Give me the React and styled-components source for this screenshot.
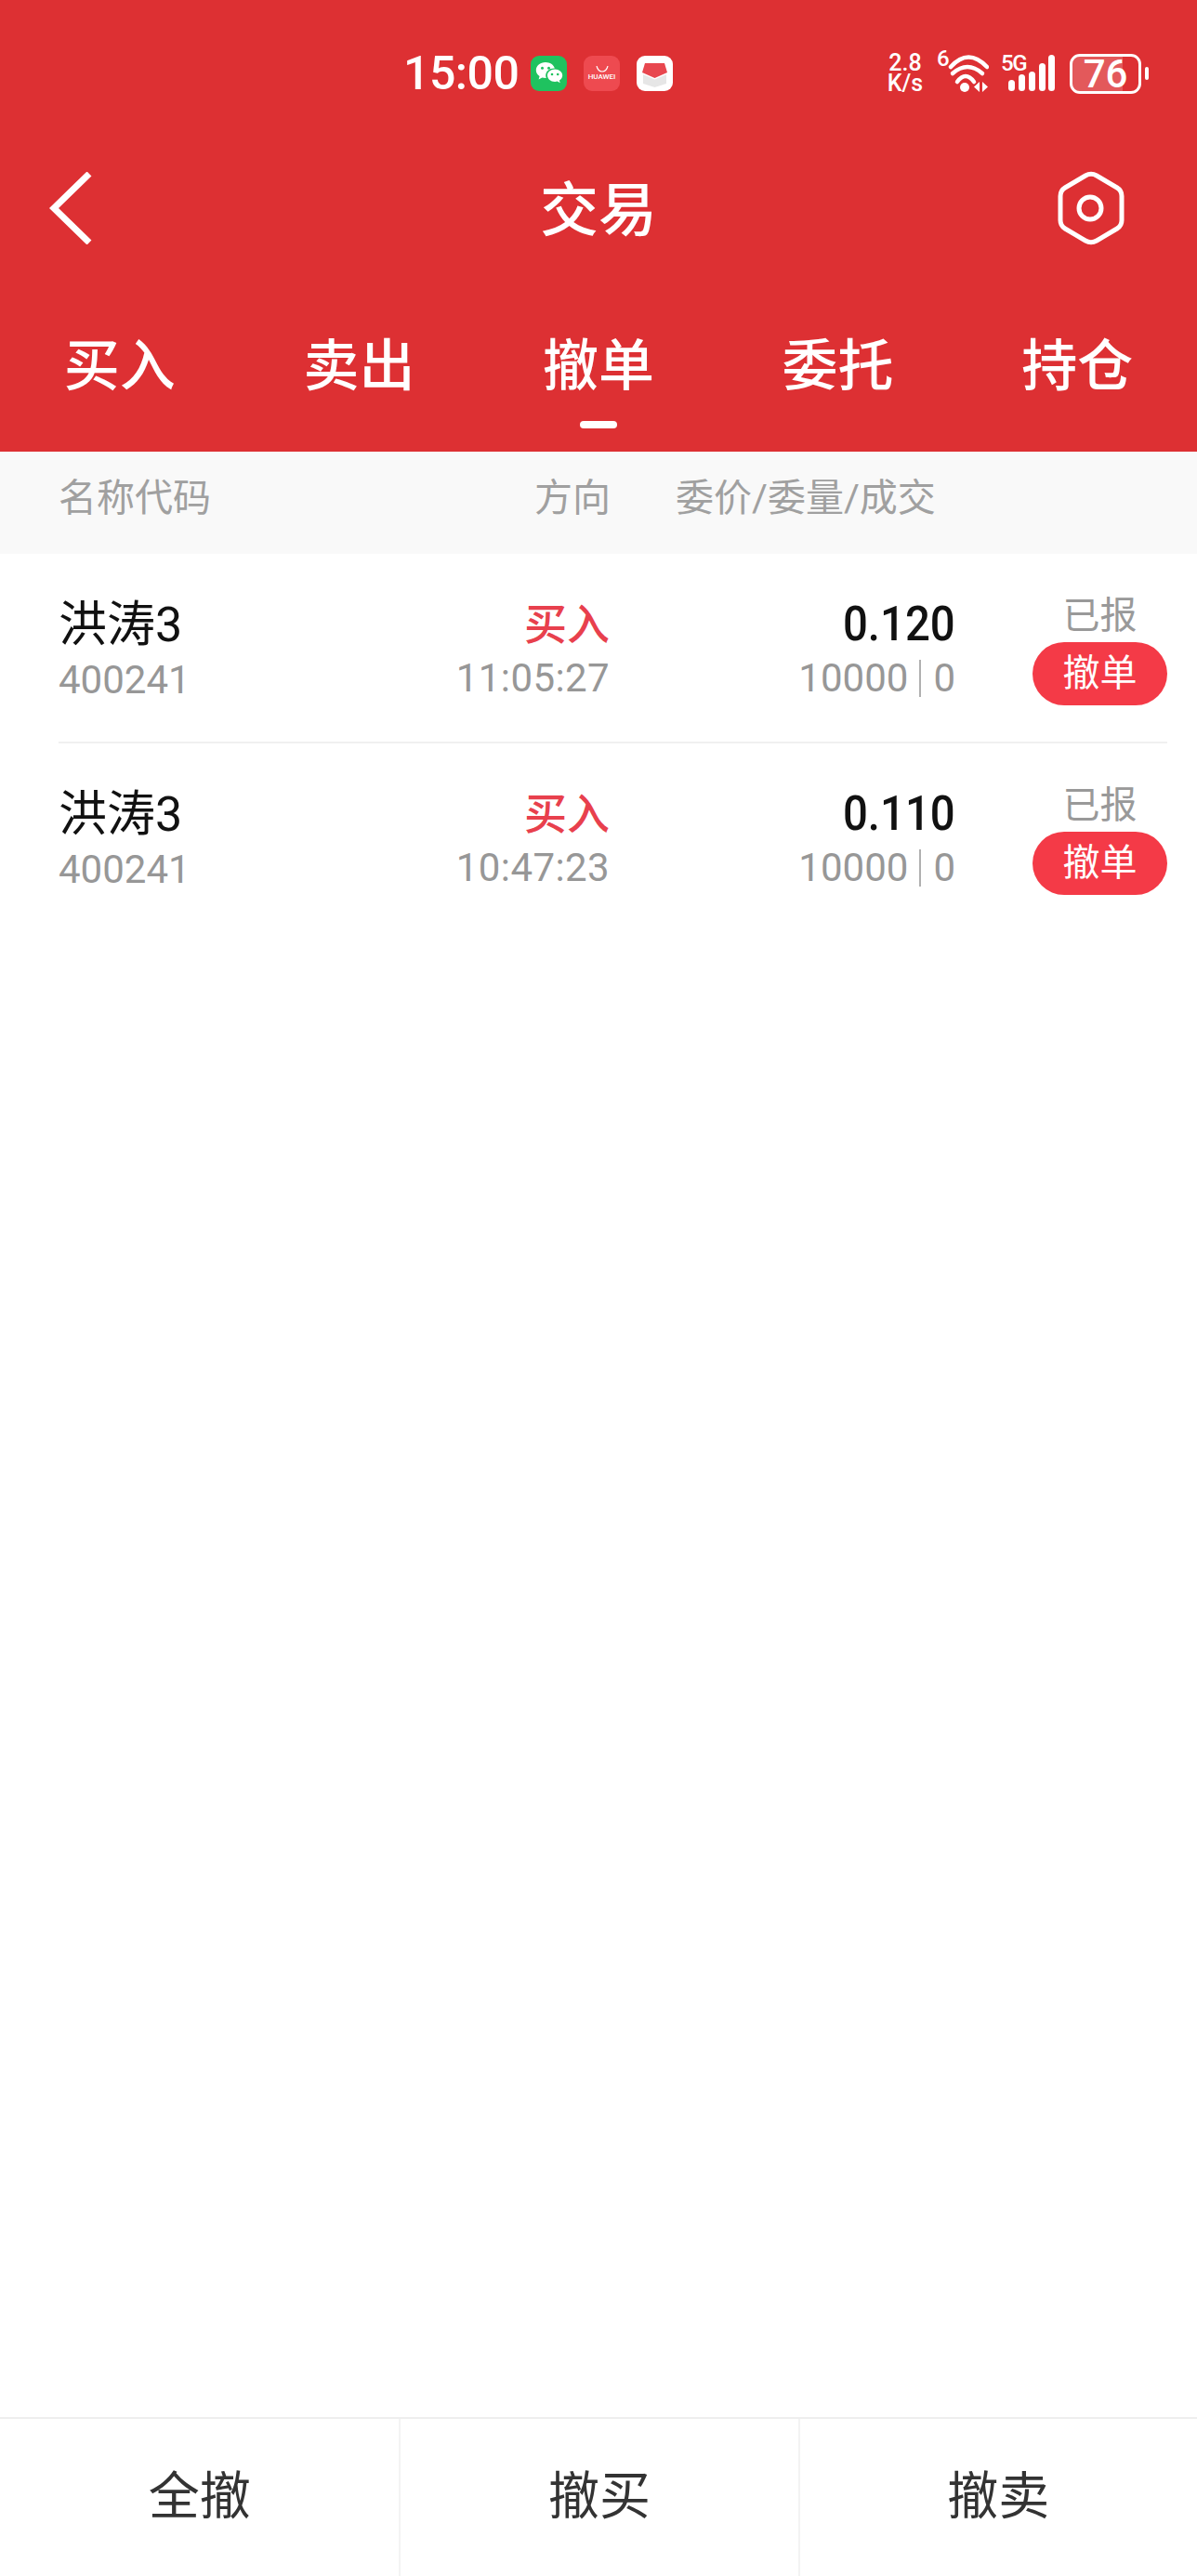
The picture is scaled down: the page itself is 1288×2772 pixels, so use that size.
import React from 'react';
import styled, { createGlobalStyle } from 'styled-components';

const GlobalStyle = createGlobalStyle`
  html, body {
    margin: 0;
    padding: 0;
    background: #fff;
  }
  * {
    box-sizing: border-box;
  }
  body {
    font-family: Roboto, "Noto Sans CJK SC", sans-serif;
  }
`;

const Page = styled.div`
  width: 1288px;
  height: 2772px;
  display: flex;
  flex-direction: column;
  background: #fff;
  overflow: hidden;
`;

const Header = styled.header`
  background: #dd3033;
  height: 486px;
  flex: none;
  color: #fff;
`;

const StatusBar = styled.div`
  height: 158px;
  padding: 0 52px 0 434px;
  display: flex;
  align-items: center;
  justify-content: space-between;
`;

const StatusLeft = styled.div`
  display: flex;
  align-items: center;
`;

const Clock = styled.span`
  font-size: 50px;
  line-height: 50px;
  width: 137px;
  font-weight: 500;
  letter-spacing: -0.5px;
`;

const AppIcon = styled.div`
  width: 39px;
  height: 38px;
  margin-right: 18px;
  border-radius: 9px;
  background: ${(p) => p.$bg};
  display: flex;
  flex-direction: column;
  align-items: center;
  justify-content: center;
`;

const HuaweiLabel = styled.span`
  font-size: 8px;
  line-height: 10px;
  font-weight: 500;
  color: #fff;
`;

const StatusRight = styled.div`
  display: flex;
  align-items: center;
`;

const Speed = styled.div`
  width: 52px;
  margin-right: 8px;
  display: flex;
  flex-direction: column;
  align-items: center;
  font-size: 25px;
  line-height: 22px;
  font-weight: 500;
`;

const WifiMark = styled.span`
  width: 12px;
  margin-top: -6px;
  align-self: flex-start;
  font-size: 24px;
  line-height: 24px;
  font-weight: 500;
`;

const SignalGroup = styled.div`
  position: relative;
  width: 50px;
  height: 40px;
  margin-left: 21px;
`;

const NetworkMark = styled.span`
  position: absolute;
  left: -8px;
  top: -3px;
  font-size: 24px;
  line-height: 24px;
  font-weight: 500;
  letter-spacing: -1.5px;
`;

const Battery = styled.div`
  position: relative;
  width: 77px;
  height: 43px;
  margin-left: 16px;
  border: 3px solid #fff;
  border-radius: 11px;
  display: flex;
  align-items: center;
  justify-content: center;
  font-size: 42px;
  font-weight: 500;
`;

const BatteryFill = styled.div`
  position: absolute;
  left: 0;
  top: 0;
  bottom: 0;
  border-radius: 8px 0 0 8px;
  background: rgba(255, 255, 255, 0.2);
`;

const BatteryValue = styled.span`
  position: relative;
  line-height: 37px;
`;

const BatteryNub = styled.div`
  width: 4px;
  height: 14px;
  margin-left: 4px;
  border-radius: 2px;
  background: #fff;
`;

const NavBar = styled.div`
  height: 132px;
  padding: 0 53px;
  display: grid;
  grid-template-columns: 1fr auto 1fr;
  align-items: center;

  > svg:last-child {
    justify-self: end;
    margin-right: 25px;
  }
`;

const NavTitle = styled.h1`
  margin: 0;
  padding-top: 6px;
  font-size: 63px;
  line-height: 70px;
  font-weight: 500;
`;

const Tabs = styled.nav`
  display: grid;
  grid-template-columns: repeat(5, 1fr);
  height: 196px;
`;

const Tab = styled.div`
  position: relative;
  padding-top: 70px;
  text-align: center;
  font-size: 60px;
  line-height: 70px;
  font-weight: 500;

  ${(p) =>
    p.$active &&
    `
    &:after {
      content: '';
      position: absolute;
      left: 50%;
      top: 163px;
      width: 40px;
      height: 8px;
      margin-left: -20px;
      border-radius: 4px;
      background: #fff;
    }
  `}
`;

const TableHead = styled.div`
  height: 110px;
  flex: none;
  background: #f9f9f9;
  padding: 0 0 18px 63px;
  display: flex;
  align-items: center;
  font-size: 41px;
  color: #a0a0a0;
`;

const HeadName = styled.span`
  width: 512px;
`;

const HeadSide = styled.span`
  width: 152px;
`;

const List = styled.main`
  flex: 1;
`;

const Row = styled.div`
  margin: 0 32px 0 63px;
  height: 204px;
  padding-top: 44px;
  border-bottom: 2px solid #f0f0f0;
  display: grid;
  grid-template-columns: 400px 193px 372px 83px 145px;
  align-items: start;

  &:last-child {
    border-bottom: 0;
  }
`;

const Cell = styled.div`
  display: flex;
  flex-direction: column;
  align-items: ${(p) => (p.$right ? 'flex-end' : 'flex-start')};
`;

const Name = styled.div`
  font-size: 52px;
  line-height: 66px;
  color: #111;
`;

const SubText = styled.div`
  font-size: 42px;
  line-height: 52px;
  color: #979797;
`;

const TimeText = styled(SubText)`
  letter-spacing: 0.4px;
`;

const Side = styled.div`
  font-size: 46px;
  line-height: 64px;
  font-weight: 500;
  color: #e8404d;
`;

const Price = styled.div`
  font-size: 52px;
  line-height: 64px;
  font-weight: 500;
  color: #111;
  transform: scaleX(0.91);
  transform-origin: right center;
`;

const Volume = styled(SubText)`
  display: flex;
  align-items: center;
`;

const VolumeDivider = styled.i`
  width: 2px;
  height: 40px;
  margin: 0 13px 0 12px;
  background: #b0b0b0;
`;

const StatusCell = styled.div`
  display: flex;
  flex-direction: column;
  align-items: center;
  margin-top: -3px;
`;

const StatusText = styled.div`
  font-size: 40px;
  line-height: 52px;
  color: #999;
`;

const CancelButton = styled.button`
  width: 145px;
  height: 68px;
  margin-top: 2px;
  padding: 0;
  border: 0;
  border-radius: 34px;
  background: #f43a47;
  color: #fff;
  font: inherit;
  font-size: 40px;
  line-height: 62px;
`;

const Footer = styled.footer`
  height: 171px;
  flex: none;
  border-top: 2px solid #eee;
  display: grid;
  grid-template-columns: repeat(3, 1fr);
`;

const FooterButton = styled.div`
  display: flex;
  align-items: center;
  justify-content: center;
  padding-bottom: 14px;
  font-size: 55px;
  color: #333;

  & + & {
    border-left: 2px solid #f3f3f3;
  }
`;

const orders = [
  { name: '洪涛3', code: '400241', side: '买入', time: '11:05:27', price: '0.120', qty: '10000', done: '0' },
  { name: '洪涛3', code: '400241', side: '买入', time: '10:47:23', price: '0.110', qty: '10000', done: '0' },
];

const WechatGlyph = () => (
  <svg width="30" height="26" viewBox="0 0 30 26">
    <path fill="#fff" d="M11 1C5.2 1 .8 4.8.8 9.4c0 2.7 1.5 5 3.8 6.6L3.6 19.4l3.8-2c1.1.3 2.3.5 3.6.5h.7c-.3-.8-.5-1.7-.5-2.6 0-4.3 4-7.7 9-7.7h.7C19.9 3.800 15.800 1 11 1z" />
    <path fill="#fff" d="M29.200 15.300c0-3.700-3.600-6.700-8.100-6.700S13 11.600 13 15.300 16.600 22 21.100 22c.9 0 1.800-.1 2.600-.4l3 1.700-.8-2.800c2-1.200 3.300-3.100 3.300-5.200z" />
    <circle cx="7.500" cy="7.200" r="1.500" fill="#1fc25f" />
    <circle cx="14.500" cy="7.200" r="1.500" fill="#1fc25f" />
    <circle cx="18" cy="14" r="1.300" fill="#1fc25f" />
    <circle cx="24.200" cy="14" r="1.300" fill="#1fc25f" />
  </svg>
);

const ParcelGlyph = () => (
  <svg width="39" height="38" viewBox="0 0 39 38">
    <path fill="#e8474f" d="M9 8h21l3 10-13.500 6L6 18z" />
    <path fill="#e6e6e6" d="M7 20l12.500 5.500L32 20v10l-12.500 4L7 30z" />
  </svg>
);

const WifiGlyph = () => (
  <svg width="44" height="40" viewBox="0 0 44 40" fill="none" stroke="#fff" strokeLinecap="round" strokeWidth="4.500">
    <path d="M3 13Q22-8 42 13" />
    <path d="M5 20Q21 6 37 20" />
    <path d="M10 29Q19 17 28 29" />
    <circle cx="18" cy="35" r="5" fill="#fff" stroke="none" />
    <path d="M34 29l-6 5.500 6 5.500zM37 29l6 5.500-6 5.500z" fill="#fff" stroke="none" />
  </svg>
);

const SignalGlyph = () => (
  <svg width="50" height="40" viewBox="0 0 50 40" fill="#fff">
    <rect x="0" y="27" width="7" height="12" rx="3.500" />
    <rect x="11" y="21" width="7" height="18" rx="3.500" />
    <rect x="22" y="18" width="7" height="21" rx="3.500" />
    <rect x="33" y="9" width="7" height="30" rx="3.500" />
    <rect x="43" y="0" width="7" height="39" rx="3.500" />
  </svg>
);

const BackIcon = () => (
  <svg width="46" height="78" viewBox="0 0 46 78" fill="none" stroke="#fff" strokeWidth="7">
    <path d="M43 2L5 39l38 37" />
  </svg>
);

const SettingsIcon = () => (
  <svg width="72" height="80" viewBox="0 0 72 80" fill="none" stroke="#fff" strokeWidth="5">
    <path d="M30 5Q36 1.500 42 5L64 18Q69 21 69 27V53Q69 59 64 62L42 75Q36 78.500 30 75L8 62Q3 59 3 53V27Q3 21 8 18Z" />
    <circle cx="35" cy="40" r="12" />
  </svg>
);

const App = () => (
  <Page>
    <GlobalStyle />
    <Header>
      <StatusBar>
        <StatusLeft>
          <Clock>15:00</Clock>
          <AppIcon $bg="#1fc25f">
            <WechatGlyph />
          </AppIcon>
          <AppIcon $bg="#ee4a50">
            <svg width="14" height="7" viewBox="0 0 14 7" fill="none" stroke="#fff" strokeWidth="1.200">
              <path d="M1 0c1 4 3 6 6 6s5-2 6-6" />
            </svg>
            <HuaweiLabel>HUAWEI</HuaweiLabel>
          </AppIcon>
          <AppIcon $bg="#fff">
            <ParcelGlyph />
          </AppIcon>
        </StatusLeft>
        <StatusRight>
          <Speed>
            <span>2.8</span>
            <span>K/s</span>
          </Speed>
          <WifiMark>6</WifiMark>
          <WifiGlyph />
          <SignalGroup>
            <NetworkMark>5G</NetworkMark>
            <SignalGlyph />
          </SignalGroup>
          <Battery>
            <BatteryFill style={{ width: '76%' }} />
            <BatteryValue>76</BatteryValue>
          </Battery>
          <BatteryNub />
        </StatusRight>
      </StatusBar>
      <NavBar>
        <BackIcon />
        <NavTitle>交易</NavTitle>
        <SettingsIcon />
      </NavBar>
      <Tabs>
        <Tab>买入</Tab>
        <Tab>卖出</Tab>
        <Tab $active>撤单</Tab>
        <Tab>委托</Tab>
        <Tab>持仓</Tab>
      </Tabs>
    </Header>
    <TableHead>
      <HeadName>名称代码</HeadName>
      <HeadSide>方向</HeadSide>
      <span>委价/委量/成交</span>
    </TableHead>
    <List>
      {orders.map((order) => (
        <Row key={order.time}>
          <Cell>
            <Name>{order.name}</Name>
            <SubText>{order.code}</SubText>
          </Cell>
          <Cell $right>
            <Side>{order.side}</Side>
            <TimeText>{order.time}</TimeText>
          </Cell>
          <Cell $right>
            <Price>{order.price}</Price>
            <Volume>
              {order.qty}
              <VolumeDivider />
              {order.done}
            </Volume>
          </Cell>
          <div />
          <StatusCell>
            <StatusText>已报</StatusText>
            <CancelButton>撤单</CancelButton>
          </StatusCell>
        </Row>
      ))}
    </List>
    <Footer>
      <FooterButton>全撤</FooterButton>
      <FooterButton>撤买</FooterButton>
      <FooterButton>撤卖</FooterButton>
    </Footer>
  </Page>
);

export default App;
